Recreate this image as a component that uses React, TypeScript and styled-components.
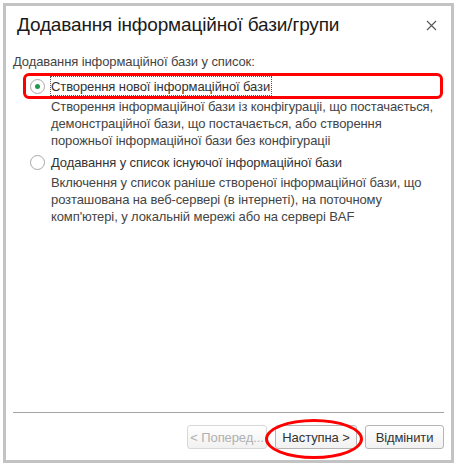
import React from 'react';
import styled, { createGlobalStyle } from 'styled-components';

const Global = createGlobalStyle`
  html, body { margin: 0; padding: 0; background: #fff; }
  body { font-family: "Liberation Sans", Arial, sans-serif; }
`;

const Window = styled.div`
  position: relative;
  box-sizing: border-box;
  margin: 3px;
  width: 451px;
  height: 460px;
  border: 3px solid #c3c3c3;
  background: #fff;
  display: flex;
  flex-direction: column;
`;

const Header = styled.div`
  display: flex;
  align-items: center;
  justify-content: space-between;
  padding: 4px 13px 0 11px;
  height: 30px;
`;

const Title = styled.h1`
  margin: 0;
  font-size: 19px;
  letter-spacing: -0.15px;
  font-weight: normal;
  color: #1a1a1a;
`;

const Close = styled.button`
  border: none;
  background: none;
  padding: 0;
  width: 14px;
  height: 14px;
  display: flex;
  align-items: center;
  justify-content: center;
`;

const Body = styled.div`
  flex: 1;
  padding: 14px 7px 0 7px;
  font-size: 13px;
  letter-spacing: -0.1px;
  color: #444;
`;

const Caption = styled.div`
  line-height: 16px;
  margin-bottom: 3px;
`;

const Option = styled.div<{ $marked?: boolean }>`
  margin-left: 10px;
  margin-right: 1px;
  border: 3px solid ${p => (p.$marked ? '#ff0000' : 'transparent')};
  border-radius: 6px;
  height: 20px;
  display: flex;
  align-items: center;
  padding: 0 4px;
`;

const Radio = styled.span<{ $checked?: boolean }>`
  box-sizing: border-box;
  flex: none;
  width: 15px;
  height: 15px;
  border-radius: 50%;
  border: 1px solid #a8a8a8;
  background: #fff;
  display: flex;
  align-items: center;
  justify-content: center;
  margin-right: 6px;
  &::after {
    content: '';
    width: 5px;
    height: 5px;
    border-radius: 50%;
    background: ${p => (p.$checked ? '#1f9a4a' : 'transparent')};
  }
`;

const OptionLabel = styled.span<{ $focused?: boolean }>`
  display: inline-flex;
  align-items: center;
  height: 18px;
  padding: 0 1px 0 0;
  color: #333;
  outline: ${p => (p.$focused ? '1px dotted #555' : 'none')};
  white-space: nowrap;
`;

const Description = styled.div`
  margin: -1px 0 0 38px;
  line-height: 17px;
  color: #444;
  white-space: nowrap;
`;

const Footer = styled.div`
  margin: 0 7px;
  border-top: 1px solid #a4a4a4;
  padding: 12px 0 11px 0;
  display: flex;
  justify-content: flex-end;
  gap: 8px;
`;

const Button = styled.button<{ $disabled?: boolean; $width: number }>`
  box-sizing: border-box;
  width: ${p => p.$width}px;
  height: 24px;
  padding: 0;
  font-family: "Liberation Sans", Arial, sans-serif;
  font-size: 13px;
  letter-spacing: -0.1px;
  color: ${p => (p.$disabled ? '#b0b0b0' : '#333')};
  border: 1px solid ${p => (p.$disabled ? '#d8d8d8' : '#b5b5b5')};
  border-radius: 3px;
  background: linear-gradient(#ffffff, #f1f1f1);
  white-space: nowrap;
`;

const Ellipse = styled.div`
  position: absolute;
  left: 259px;
  top: 413px;
  width: 92px;
  height: 34px;
  border: 3px solid #ff0000;
  border-radius: 50%;
  pointer-events: none;
`;

export default function App() {
  return (
    <>
      <Global />
      <Window>
        <Header>
          <Title>Додавання інформаційної бази/групи</Title>
          <Close aria-label="Закрити">
            <svg width="11" height="11" viewBox="0 0 11 11">
              <path d="M1 1L10 10M10 1L1 10" stroke="#555" strokeWidth="1.1" />
            </svg>
          </Close>
        </Header>
        <Body>
          <Caption>Додавання інформаційної бази у список:</Caption>
          <Option $marked>
            <Radio $checked />
            <OptionLabel $focused>Створення нової інформаційної бази</OptionLabel>
          </Option>
          <Description>
            Створення інформаційної бази із конфігураціі, що постачається,
            <br />
            демонстраційної бази, що постачається, або створення
            <br />
            порожньої інформаційної бази без конфігураціі
          </Description>
          <Option>
            <Radio />
            <OptionLabel>Додавання у список існуючої інформаційної бази</OptionLabel>
          </Option>
          <Description>
            Включення у список раніше створеної інформаційної бази, що
            <br />
            розташована на веб-сервері (в інтернеті), на поточному
            <br />
            комп'ютері, у локальній мережі або на сервері BAF
          </Description>
        </Body>
        <Footer>
          <Button $disabled $width={80}>&lt; Поперед...</Button>
          <Button $width={82}>Наступна &gt;</Button>
          <Button $width={79}>Відмінити</Button>
        </Footer>
        <Ellipse />
      </Window>
    </>
  );
}
